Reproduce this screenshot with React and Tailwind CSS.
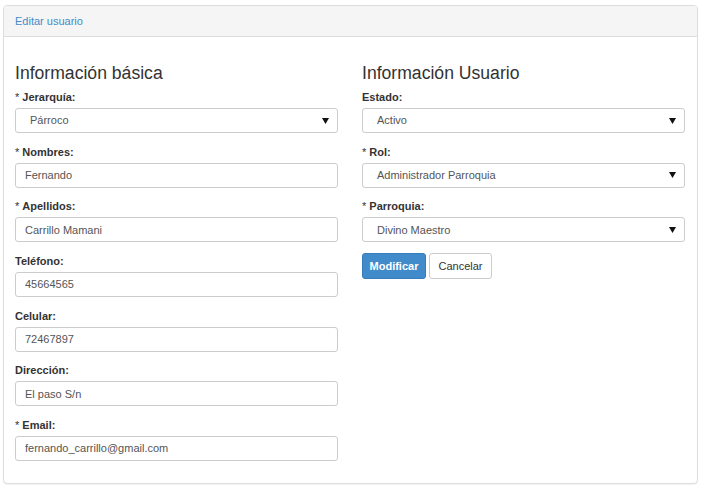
import React from "react";

const Arrow = () => (
  <svg width="7" height="6" viewBox="0 0 7 6" className="shrink-0">
    <path d="M0 0 H7 L3.5 6 Z" fill="#111" />
  </svg>
);

const Field = ({ label, required, value, select, last }) => (
  <div className={last ? "" : "mb-[10.67px]"}>
    <div className="h-4 mb-[3px] text-[11px] leading-4 font-bold text-[#333]">
      {required && <span className="font-normal">* </span>}
      {label}
    </div>
    {select ? (
      <div className="h-[25px] border border-[#ccc] rounded-[3px] bg-white flex items-center justify-between pl-[14px] pr-[8px] text-[11px] text-[#555]">
        <span>{value}</span>
        <Arrow />
      </div>
    ) : (
      <input
        readOnly
        value={value}
        className="block w-full h-[25px] border border-[#ccc] rounded-[3px] bg-white px-[9px] text-[11px] text-[#555] outline-none"
      />
    )}
  </div>
);

const App = () => {
  const basic = [
    { label: "Jerarquía:", required: true, value: "Párroco", select: true },
    { label: "Nombres:", required: true, value: "Fernando" },
    { label: "Apellidos:", required: true, value: "Carrillo Mamani" },
    { label: "Teléfono:", value: "45664565" },
    { label: "Celular:", value: "72467897" },
    { label: "Dirección:", value: "El paso S/n" },
    { label: "Email:", required: true, value: "fernando_carrillo@gmail.com" },
  ];

  const user = [
    { label: "Estado:", value: "Activo", select: true },
    { label: "Rol:", required: true, value: "Administrador Parroquia", select: true },
    { label: "Parroquia:", required: true, value: "Divino Maestro", select: true },
  ];

  return (
    <div className="min-h-screen bg-white pt-[5px] pl-[3px] pr-[3px] font-['Liberation_Sans',Arial,sans-serif]">
      <div className="border border-[#ddd] rounded-[4px] bg-white shadow-[0_1px_1px_rgba(0,0,0,0.05)]">
        {/* Header */}
        <div className="bg-[#f5f5f5] border-b border-[#ddd] rounded-t-[3px] px-[11px] py-[7px] text-[11px] leading-4 text-[#428bca]">
          Editar usuario
        </div>

        {/* Body */}
        <div className="flex gap-[24px] pl-[11px] pr-[12px] pt-[26px] pb-[22px]">
          <div className="flex-1">
            <h2 className="text-[17.6px] leading-5 text-[#333] mb-[6px]">Información básica</h2>
            {basic.map((f, i) => (
              <Field key={f.label} {...f} last={i === basic.length - 1} />
            ))}
          </div>

          <div className="flex-1">
            <h2 className="text-[17.6px] leading-5 text-[#333] mb-[6px]">Información Usuario</h2>
            {user.map((f) => (
              <Field key={f.label} {...f} />
            ))}
            <div className="flex gap-[3px] mt-[0.33px]">
              <button className="h-[26px] w-[64px] rounded-[3px] bg-[#428bca] border border-[#357ebd] text-white text-[11px] font-bold">
                Modificar
              </button>
              <button className="h-[26px] w-[63px] rounded-[3px] bg-white border border-[#ccc] text-[#333] text-[11px]">
                Cancelar
              </button>
            </div>
          </div>
        </div>
      </div>
    </div>
  );
};

export default App;
